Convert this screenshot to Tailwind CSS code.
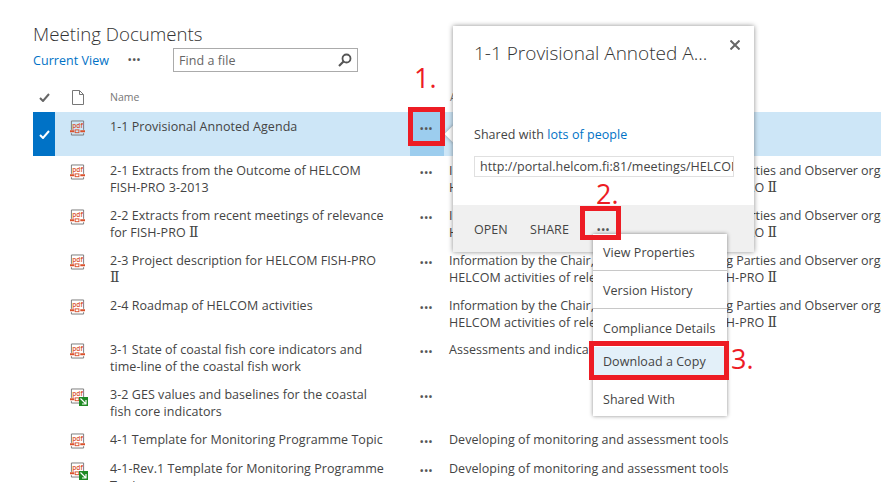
<!DOCTYPE html>
<html lang="en">
<head>
<meta charset="UTF-8">
<title>Meeting Documents</title>
<script src="https://cdn.jsdelivr.net/npm/@tailwindcss/browser@4"></script>
</head>
<body class="bg-white">
<svg class="hidden">
  <symbol id="pdf" viewBox="0 0 16 16">
    <path d="M1.500 10V.5h13V10M1.500 13.500v2h13v-2" fill="none" stroke="#777" stroke-width="1"/>
    <text x="8" y="8" text-anchor="middle" font-size="7" font-weight="600" fill="#d9512c" font-family="'Open Sans',sans-serif">pdf</text>
    <path d="M0 11.500h4.500M11 11.500h5" stroke="#d9512c" stroke-width="2"/>
    <rect x="5.500" y="10" width="4" height="3" fill="none" stroke="#d9512c"/>
  </symbol>
  <symbol id="link" viewBox="0 0 9 9">
    <rect width="9" height="9" fill="#1f8a24"/>
    <path d="M1.500 1.500 6.500 6.500M7 3v4H3" fill="none" stroke="#fff" stroke-width="1.200"/>
  </symbol>
</svg>

<div class="relative w-[881px] h-[482px] overflow-hidden font-['Open_Sans',sans-serif] text-[12.500px] leading-[17px] text-[#444] tracking-[0.05px]">
  <div class="pl-[33px] pt-[22px]">
    <h1 class="text-[18.700px] leading-[24px] font-light text-[#333] tracking-normal">Meeting Documents</h1>
    <div class="flex items-center h-[24px] mt-[2px]">
      <a class="w-[95px] text-[#0072c6]">Current View</a>
      <span class="w-[45px] text-[#555] font-bold text-[9px] tracking-[1px] leading-[10px]">•••</span>
      <div class="flex items-center justify-between w-[185px] h-[24px] border border-[#ababab] pl-[5px] pr-[5px] text-[#666]">
        <span>Find a file</span>
        <svg width="14" height="14" viewBox="0 0 14 14"><circle cx="8.500" cy="5.500" r="4" fill="none" stroke="#555" stroke-width="1.800"/><path d="M5.500 8.500 1 13" stroke="#555" stroke-width="2.200"/></svg>
      </div>
    </div>
    <div class="flex items-center h-[24px] mt-[13px]">
      <svg class="ml-[6px] w-[11px] h-[9px]" viewBox="0 0 11 9"><path d="M1 5l3 3 6-7" fill="none" stroke="#666" stroke-width="2"/></svg>
      <svg class="ml-[22px] w-[12px] h-[15px]" viewBox="0 0 12 15"><path d="M.500.500h7l4 4v10h-11zM7.500.500v4h4" fill="none" stroke="#777"/></svg>
      <span class="ml-[26px] w-[340px] pt-[1px] text-[10.500px] text-[#777]">Name</span>
      <span class="pt-[1px] text-[10.500px] text-[#777]">A</span>
    </div>

    <div class="flex h-[44px] bg-[#cde6f7] mt-[3px]">
      <div class="flex items-center justify-center w-[22px] bg-[#0072c6]">
        <svg class="w-[11px] h-[9px]" viewBox="0 0 11 9"><path d="M1 5l3 3 6-7" fill="none" stroke="#fff" stroke-width="2"/></svg>
      </div>
      <div class="relative w-[55px] shrink-0"><svg class="absolute left-[15px] top-[8px] w-[15px] h-[16px]"><use href="#pdf"/></svg></div>
      <div class="w-[300px] shrink-0 pt-[6px]">1-1 Provisional Annoted Agenda</div>
      <div class="w-[34px] shrink-0 bg-[#9ccdee] pl-[10px] text-[#555] font-bold text-[9px] pt-[8px] tracking-[1px]">•••</div>
    </div>

    <div class="flex h-[45px]">
      <div class="relative w-[77px] shrink-0"><svg class="absolute left-[37px] top-[8px] w-[15px] h-[16px]"><use href="#pdf"/></svg></div>
      <div class="w-[300px] shrink-0 pt-[6px]">2-1 Extracts from the Outcome of HELCOM<br>FISH-PRO 3-2013</div>
      <div class="w-[39px] shrink-0 pl-[10px] text-[#555] font-bold text-[9px] pt-[8px] tracking-[1px]">•••</div>
      <div class="pt-[6px] whitespace-nowrap"><span class="tracking-[-0.05px]">Information by the Chair, Secretariat, Contracting Parties and Observer organizations</span><br>HELCOM activities of relevance for HELCOM FISH-PRO <span class="font-['DejaVu_Serif'] text-[14px]">Ⅱ</span></div>
    </div>
    <div class="flex h-[45px]">
      <div class="relative w-[77px] shrink-0"><svg class="absolute left-[37px] top-[8px] w-[15px] h-[16px]"><use href="#pdf"/></svg></div>
      <div class="w-[300px] shrink-0 pt-[6px]">2-2 Extracts from recent meetings of relevance<br>for FISH-PRO <span class="font-['DejaVu_Serif'] text-[14px]">Ⅱ</span></div>
      <div class="w-[39px] shrink-0 pl-[10px] text-[#555] font-bold text-[9px] pt-[8px] tracking-[1px]">•••</div>
      <div class="pt-[6px] whitespace-nowrap"><span class="tracking-[-0.05px]">Information by the Chair, Secretariat, Contracting Parties and Observer organizations</span><br>HELCOM activities of relevance for HELCOM FISH-PRO <span class="font-['DejaVu_Serif'] text-[14px]">Ⅱ</span></div>
    </div>
    <div class="flex h-[45px]">
      <div class="relative w-[77px] shrink-0"><svg class="absolute left-[37px] top-[8px] w-[15px] h-[16px]"><use href="#pdf"/></svg></div>
      <div class="w-[300px] shrink-0 pt-[6px]">2-3 Project description for HELCOM FISH-PRO<br><span class="font-['DejaVu_Serif'] text-[14px]">Ⅱ</span></div>
      <div class="w-[39px] shrink-0 pl-[10px] text-[#555] font-bold text-[9px] pt-[8px] tracking-[1px]">•••</div>
      <div class="pt-[6px] whitespace-nowrap"><span class="tracking-[-0.05px]">Information by the Chair, Secretariat, Contracting Parties and Observer organizations</span><br>HELCOM activities of relevance for HELCOM FISH-PRO <span class="font-['DejaVu_Serif'] text-[14px]">Ⅱ</span></div>
    </div>
    <div class="flex h-[44px]">
      <div class="relative w-[77px] shrink-0"><svg class="absolute left-[37px] top-[8px] w-[15px] h-[16px]"><use href="#pdf"/></svg></div>
      <div class="w-[300px] shrink-0 pt-[6px]">2-4 Roadmap of HELCOM activities</div>
      <div class="w-[39px] shrink-0 pl-[10px] text-[#555] font-bold text-[9px] pt-[8px] tracking-[1px]">•••</div>
      <div class="pt-[6px] whitespace-nowrap"><span class="tracking-[-0.05px]">Information by the Chair, Secretariat, Contracting Parties and Observer organizations</span><br>HELCOM activities of relevance for HELCOM FISH-PRO <span class="font-['DejaVu_Serif'] text-[14px]">Ⅱ</span></div>
    </div>
    <div class="flex h-[45px]">
      <div class="relative w-[77px] shrink-0"><svg class="absolute left-[37px] top-[8px] w-[15px] h-[16px]"><use href="#pdf"/></svg></div>
      <div class="w-[300px] shrink-0 pt-[6px]">3-1 State of coastal fish core indicators and<br>time-line of the coastal fish work</div>
      <div class="w-[39px] shrink-0 pl-[10px] text-[#555] font-bold text-[9px] pt-[8px] tracking-[1px]">•••</div>
      <div class="pt-[6px] whitespace-nowrap">Assessments and indicators</div>
    </div>
    <div class="flex h-[45px]">
      <div class="relative w-[77px] shrink-0">
        <svg class="absolute left-[37px] top-[8px] w-[15px] h-[16px]"><use href="#pdf"/></svg>
        <svg class="absolute left-[46px] top-[17px] w-[9px] h-[9px]"><use href="#link"/></svg>
      </div>
      <div class="w-[300px] shrink-0 pt-[6px]">3-2 GES values and baselines for the coastal<br>fish core indicators</div>
      <div class="w-[39px] shrink-0 pl-[10px] text-[#555] font-bold text-[9px] pt-[8px] tracking-[1px]">•••</div>
    </div>
    <div class="flex h-[29px]">
      <div class="relative w-[77px] shrink-0"><svg class="absolute left-[37px] top-[8px] w-[15px] h-[16px]"><use href="#pdf"/></svg></div>
      <div class="w-[300px] shrink-0 pt-[6px]">4-1 Template for Monitoring Programme Topic</div>
      <div class="w-[39px] shrink-0 pl-[10px] text-[#555] font-bold text-[9px] pt-[8px] tracking-[1px]">•••</div>
      <div class="pt-[6px] whitespace-nowrap">Developing of monitoring and assessment tools</div>
    </div>
    <div class="flex h-[45px]">
      <div class="relative w-[77px] shrink-0">
        <svg class="absolute left-[37px] top-[8px] w-[15px] h-[16px]"><use href="#pdf"/></svg>
        <svg class="absolute left-[46px] top-[17px] w-[9px] h-[9px]"><use href="#link"/></svg>
      </div>
      <div class="w-[300px] shrink-0 pt-[6px]">4-1-Rev.1 Template for Monitoring Programme<br>Topic</div>
      <div class="w-[39px] shrink-0 pl-[10px] text-[#555] font-bold text-[9px] pt-[8px] tracking-[1px]">•••</div>
      <div class="pt-[6px] whitespace-nowrap">Developing of monitoring and assessment tools</div>
    </div>
  </div>

  <!-- callout -->
  <div class="absolute left-[447px] top-[128px] w-[12px] h-[12px] rotate-45 bg-white shadow-[0_0_4px_rgba(0,0,0,0.35)]"></div>
  <div class="absolute left-[453px] top-[26px] w-[301px] h-[226px] bg-white shadow-[0_0_5px_rgba(0,0,0,0.45)] flex flex-col">
    <div class="relative flex-1 px-[21px]">
      <div class="pt-[14px] text-[19px] leading-[26px] font-light text-[#333] tracking-normal whitespace-nowrap">1-1 Provisional Annoted A...</div>
      <svg class="absolute left-[277px] top-[14px] w-[10px] h-[10px]" viewBox="0 0 10 10"><path d="M.500.500l9 9M9.500.500l-9 9" stroke="#666" stroke-width="2"/></svg>
      <div class="mt-[60px]">Shared with <span class="text-[#0072c6]">lots of people</span></div>
      <div class="mt-[13px] w-[260px] h-[21px] border border-[#e0e0e0] px-[5px] leading-[19px] whitespace-nowrap overflow-hidden">http://portal.helcom.fi:81/meetings/HELCOM</div>
    </div>
    <div class="flex items-center h-[47px] bg-[#f0f0f0] pl-[21px] pt-[1px]">
      <span class="w-[56px]">OPEN</span>
      <span class="w-[67px]">SHARE</span>
      <span class="text-[#555] font-bold text-[9px] tracking-[1px]">•••</span>
    </div>
  </div>

  <!-- menu -->
  <div class="absolute left-[593px] top-[234px] w-[134px] h-[182px] bg-white shadow-[0_0_4px_rgba(0,0,0,0.45)] flex flex-col">
    <div class="flex items-center h-[37px] pl-[10px] border-b border-[#c8c8c8]">View Properties</div>
    <div class="flex items-center h-[38px] pl-[10px] pt-[1px] border-b border-[#c8c8c8]">Version History</div>
    <div class="flex items-center h-[38px] pl-[10px]">Compliance Details</div>
    <div class="flex items-center h-[28px] pl-[10px] bg-[#e3f0f9]">Download a Copy</div>
    <div class="flex items-center h-[41px] pl-[10px] pt-[7px]">Shared With</div>
  </div>

  <!-- red annotations -->
  <div class="absolute left-[408px] top-[107px] w-[37px] h-[39px] border-[5px] border-[#ed1c24]"></div>
  <div class="absolute left-[580px] top-[206px] w-[41px] h-[34px] border-[5px] border-[#ed1c24]"></div>
  <div class="absolute left-[589px] top-[341px] w-[140px] h-[39px] border-[5px] border-[#ed1c24]"></div>
  <span class="absolute left-[414px] top-[61px] text-[27px] leading-[34px] text-[#ed1c24]">1.</span>
  <span class="absolute left-[596px] top-[177px] text-[27px] leading-[34px] text-[#ed1c24]">2.</span>
  <span class="absolute left-[731px] top-[342px] text-[27px] leading-[34px] text-[#ed1c24]">3.</span>
</div>
</body>
</html>
